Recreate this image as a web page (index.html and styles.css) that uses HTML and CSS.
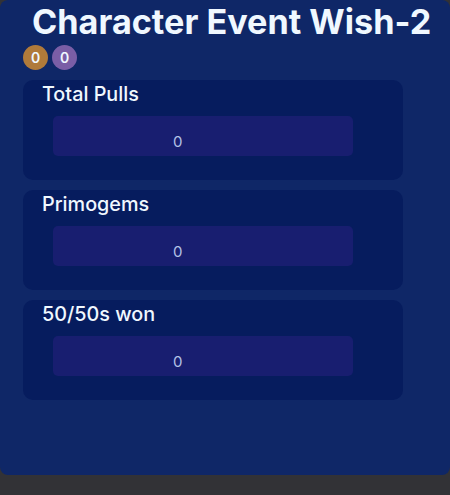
FILE: index.html
```html
<!DOCTYPE html>
<html>
<head>
<meta charset="utf-8">
<link rel="stylesheet" href="styles.css">
</head>
<body>
<div class="panel">
  <h1 class="title">Character Event Wish-2</h1>
  <div class="badges">
    <span class="badge badge-gold">0</span>
    <span class="badge badge-purple">0</span>
  </div>
  <div class="cards">
    <div class="card">
      <div class="card-title">Total Pulls</div>
      <div class="field">0</div>
    </div>
    <div class="card">
      <div class="card-title">Primogems</div>
      <div class="field">0</div>
    </div>
    <div class="card">
      <div class="card-title">50/50s won</div>
      <div class="field">0</div>
    </div>
  </div>
</div>
</body>
</html>
```

FILE: styles.css
```css
html, body {
  margin: 0;
  padding: 0;
  background: #323236;
  font-family: Inter, "Noto Sans", sans-serif;
}
.panel {
  width: 450px;
  height: 475px;
  box-sizing: border-box;
  background: #0f2767;
  border-radius: 8px;
  padding: 0 0 0 23px;
}
.title {
  margin: 0;
  padding: 2px 0 0 9px;
  font-size: 34.2px;
  font-weight: 700;
  line-height: 40px;
  color: #f0f8ff;
  white-space: nowrap;
}
.badges {
  display: flex;
  gap: 4px;
  margin-top: 3px;
  height: 25px;
}
.badge {
  width: 25px;
  height: 25px;
  border-radius: 50%;
  display: flex;
  align-items: center;
  justify-content: center;
  font-size: 14px;
  font-weight: 600;
  color: #f0f8ff;
}
.badge-gold { background: #b07a3a; }
.badge-purple { background: #7a5ea6; }
.cards {
  display: flex;
  flex-direction: column;
  gap: 10px;
  margin-top: 10px;
  width: 380px;
}
.card {
  height: 100px;
  box-sizing: border-box;
  background: #061c5e;
  border-radius: 10px;
  padding: 2px 0 0 19px;
}
.card-title {
  font-size: 19.8px;
  font-weight: 500;
  line-height: 24px;
  color: #f0f8ff;
}
.field {
  margin: 10px 0 0 11px;
  width: 300px;
  height: 40px;
  background: #181e70;
  border-radius: 5px;
  display: flex;
  align-items: center;
  padding: 10px 0 0 120px;
  box-sizing: border-box;
  font-size: 15px;
  color: #b4c2e6;
}
```
